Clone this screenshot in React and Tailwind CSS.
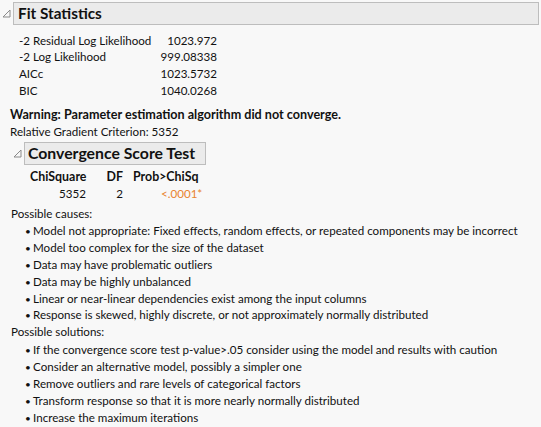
import React from "react";

const stats = [
  ["-2 Residual Log Likelihood", "1023.972"],
  ["-2 Log Likelihood", "999.08338"],
  ["AICc", "1023.5732"],
  ["BIC", "1040.0268"],
];

const causes = [
  "Model not appropriate: Fixed effects, random effects, or repeated components may be incorrect",
  "Model too complex for the size of the dataset",
  "Data may have problematic outliers",
  "Data may be highly unbalanced",
  "Linear or near-linear dependencies exist among the input columns",
  "Response is skewed, highly discrete, or not approximately normally distributed",
];

const solutions = [
  "If the convergence score test p-value>.05 consider using the model and results with caution",
  "Consider an alternative model, possibly a simpler one",
  "Remove outliers and rare levels of categorical factors",
  "Transform response so that it is more nearly normally distributed",
  "Increase the maximum iterations",
];

function Toggle() {
  return (
    <svg width="9" height="9" viewBox="0 0 9 9" className="shrink-0">
      <path d="M8 1 L8 8 L1 8 Z" fill="none" stroke="#8a8a8a" strokeWidth="1" />
    </svg>
  );
}

function Bullets({ items, className = "" }) {
  return (
    <ul className={"pl-[14px] " + className}>
      {items.map((t) => (
        <li key={t} className="flex h-[16.9px] items-center">
          <span className="w-[8px] text-[10px]">•</span>
          <span>{t}</span>
        </li>
      ))}
    </ul>
  );
}

export default function App() {
  return (
    <div
      className="w-[541px] h-[427px] bg-[#f8f8f8] text-[#111] text-[11.6px] leading-[16.9px] overflow-hidden"
      style={{ fontFamily: "Lato, 'Liberation Sans', sans-serif" }}
    >
      <div className="flex items-center gap-[2px] pl-[2px] pt-[2px] pr-[2px]">
        <Toggle />
        <div className="flex-1 h-[23px] bg-[#ebebeb] border border-[#bdbdbd] flex items-center pl-[4px] text-[15.3px] font-bold">
          Fit Statistics
        </div>
      </div>

      <div className="pl-[19px] pt-[7.6px] grid grid-cols-[140px_58px] w-max">
        {stats.map(([k, v]) => (
          <React.Fragment key={k}>
            <div className="h-[16.75px]">{k}</div>
            <div className="h-[16.75px] text-right">{v}</div>
          </React.Fragment>
        ))}
      </div>

      <div className="pl-[10px] pt-[7px]">
        <div className="font-bold text-[12.6px] h-[17.5px]">Warning: Parameter estimation algorithm did not converge.</div>
        <div className="h-[17px]">Relative Gradient Criterion: 5352</div>
      </div>

      <div className="flex items-center gap-[2px] pl-[13px] pt-[1px]">
        <Toggle />
        <div className="h-[23px] w-[182px] bg-[#ebebeb] border border-[#bdbdbd] flex items-center pl-[3px] text-[15.8px] font-bold">
          Convergence Score Test
        </div>
      </div>

      <div className="pl-[30px] pt-[3.6px] grid grid-cols-[56px_37px_auto] w-max">
        <div className="font-bold text-[12.4px] text-right">ChiSquare</div>
        <div className="font-bold text-[12.4px] text-right">DF</div>
        <div className="font-bold text-[12.4px] pl-[10px]">Prob&gt;ChiSq</div>
        <div className="text-right">5352</div>
        <div className="text-right">2</div>
        <div className="pl-[38px] text-[#e9842f]">&lt;.0001*</div>
      </div>

      <div className="pl-[11px] pt-[3.6px]">
        <div>Possible causes:</div>
        <Bullets items={causes} />
        <div>Possible solutions:</div>
        <Bullets items={solutions} className="mt-[1px]" />
      </div>
    </div>
  );
}
